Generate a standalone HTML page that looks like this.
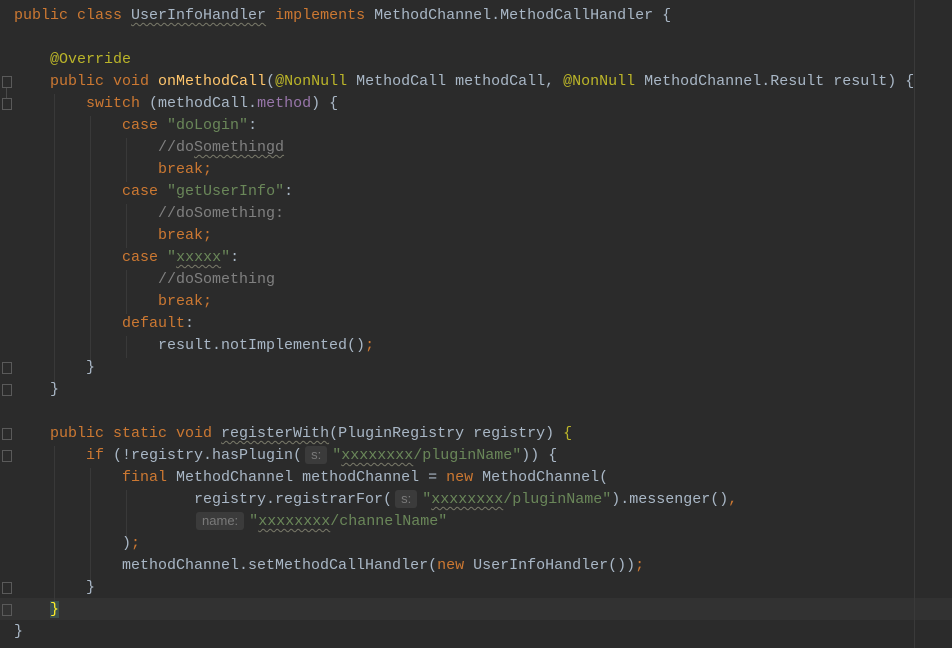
<!DOCTYPE html>
<html><head><meta charset="utf-8"><style>
body{margin:0;width:952px;height:648px;background:#2b2b2b;overflow:hidden;position:relative;font-family:"Liberation Mono",monospace;font-size:15px;color:#a9b7c6}
.l{position:absolute;left:14px;height:22px;line-height:22px;white-space:pre}
.k{color:#cc7832}.s{color:#6a8759}.a{color:#bbb529}.c{color:#808080}.m{color:#ffc66d}.f{color:#9876aa}
.u{text-decoration:underline wavy #7a7a6a;text-decoration-thickness:1px;text-underline-offset:3px}
.h{display:inline-block;background:#3b3b3b;color:#7a7a7a;font-family:"Liberation Sans",sans-serif;font-size:13px;line-height:18px;border-radius:3px;padding:0 6px;margin:0 5px 0 3px;vertical-align:0px}
.cur{position:absolute;left:0;top:598px;width:952px;height:22px;background:#323232}
.rm{position:absolute;left:914px;top:0;width:1px;height:648px;background:#3a3a3a}
.g{position:absolute;width:1px;background:#393939}
.fold{position:absolute;left:2px;width:10px;height:12px;border:1px solid #5a5a5a;box-sizing:border-box}
</style></head><body>
<div class="cur"></div>
<div class="rm"></div>
<div class="g" style="left:54px;top:94px;height:300px"></div>
<div class="g" style="left:90px;top:116px;height:248px"></div>
<div class="g" style="left:126px;top:138px;height:44px"></div>
<div class="g" style="left:126px;top:204px;height:44px"></div>
<div class="g" style="left:126px;top:270px;height:44px"></div>
<div class="g" style="left:126px;top:336px;height:22px"></div>
<div class="g" style="left:54px;top:446px;height:160px"></div>
<div class="g" style="left:90px;top:468px;height:116px"></div>
<div class="g" style="left:126px;top:490px;height:50px"></div>
<div class="fold" style="top:76px"></div>
<div class="fold" style="top:98px"></div>
<div class="fold" style="top:362px"></div>
<div class="fold" style="top:384px"></div>
<div class="fold" style="top:428px"></div>
<div class="fold" style="top:450px"></div>
<div class="fold" style="top:582px"></div>
<div class="fold" style="top:604px"></div>
<div class="g" style="left:6px;top:88px;height:10px;background:#4a4a4a"></div>
<div class="l" style="top:5px"><span class="k">public class </span><span class="u">UserInfoHandler</span><span class="k"> implements </span>MethodChannel.MethodCallHandler {</div>
<div class="l" style="top:49px">    <span class="a">@Override</span></div>
<div class="l" style="top:71px">    <span class="k">public void </span><span class="m">onMethodCall</span>(<span class="a">@NonNull</span> MethodCall methodCall, <span class="a">@NonNull</span> MethodChannel.Result result) {</div>
<div class="l" style="top:93px">        <span class="k">switch </span>(methodCall.<span class="f">method</span>) {</div>
<div class="l" style="top:115px">            <span class="k">case </span><span class="s">"doLogin"</span>:</div>
<div class="l" style="top:137px">                <span class="c">//do<span class="u">Somethingd</span></span></div>
<div class="l" style="top:159px">                <span class="k">break;</span></div>
<div class="l" style="top:181px">            <span class="k">case </span><span class="s">"getUserInfo"</span>:</div>
<div class="l" style="top:203px">                <span class="c">//doSomething:</span></div>
<div class="l" style="top:225px">                <span class="k">break;</span></div>
<div class="l" style="top:247px">            <span class="k">case </span><span class="s">"<span class="u">xxxxx</span>"</span>:</div>
<div class="l" style="top:269px">                <span class="c">//doSomething</span></div>
<div class="l" style="top:291px">                <span class="k">break;</span></div>
<div class="l" style="top:313px">            <span class="k">default</span>:</div>
<div class="l" style="top:335px">                result.notImplemented()<span class="k">;</span></div>
<div class="l" style="top:357px">        }</div>
<div class="l" style="top:379px">    }</div>
<div class="l" style="top:423px">    <span class="k">public static void </span><span class="u">registerWith</span>(PluginRegistry registry) <span class="a">{</span></div>
<div class="l" style="top:445px">        <span class="k">if </span>(!registry.hasPlugin(<span class="h">s:</span><span class="s">"<span class="u">xxxxxxxx</span>/pluginName"</span>)) {</div>
<div class="l" style="top:467px">            <span class="k">final </span>MethodChannel methodChannel = <span class="k">new </span>MethodChannel(</div>
<div class="l" style="top:489px">                    registry.registrarFor(<span class="h">s:</span><span class="s">"<span class="u">xxxxxxxx</span>/pluginName"</span>).messenger()<span class="k">,</span></div>
<div class="l" style="top:511px">                    <span class="h" style="margin-left:2px">name:</span><span class="s">"<span class="u">xxxxxxxx</span>/channelName"</span></div>
<div class="l" style="top:533px">            )<span class="k">;</span></div>
<div class="l" style="top:555px">            methodChannel.setMethodCallHandler(<span class="k">new </span>UserInfoHandler())<span class="k">;</span></div>
<div class="l" style="top:577px">        }</div>
<div class="l" style="top:599px">    <span style="color:#ffef28;background:#3b514d">}</span></div>
<div class="l" style="top:621px">}</div>
</body></html>
